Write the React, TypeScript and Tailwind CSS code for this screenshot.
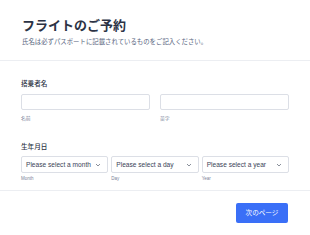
import React from "react";

const font = { fontFamily: '"Noto Sans CJK JP", "Liberation Sans", sans-serif' };

function Chevron() {
  return (
    <svg width="6" height="4" viewBox="0 0 6 4" className="shrink-0">
      <path d="M1 1 L3 3 L5 1" fill="none" stroke="#6b7280" strokeWidth="0.8" />
    </svg>
  );
}

function Select({ label, sub }: { label: string; sub: string }) {
  return (
    <div className="flex flex-col">
      <div className="flex h-[17px] items-center justify-between rounded-[2px] border border-[#dcdfe6] bg-white pl-[4px] pr-[6px]">
        <span className="font-['Liberation_Sans',sans-serif] text-[6.6px] text-[#3b4357]">{label}</span>
        <Chevron />
      </div>
      <span className="mt-[3px] font-['Liberation_Sans',sans-serif] text-[4.5px] leading-[6px] text-[#7a8399]">{sub}</span>
    </div>
  );
}

export default function App() {
  return (
    <div className="h-[235px] w-[310px] overflow-hidden bg-white" style={font}>
      <div className="border-b border-[#eceef2] px-[22px] pb-[14px] pt-[16px]">
        <h1 className="text-[13px] font-bold leading-[18px] text-[#2c3345]">フライトのご予約</h1>
        <p className="mt-[3px] text-[6.4px] leading-[9px] text-[#57647e]">
          氏名は必ずパスポートに記載されているものをご記入ください。
        </p>
      </div>

      <div className="px-[21px] pt-[18px]">
        <div className="text-[6.6px] font-medium leading-[9px] text-[#2c3345]">搭乗者名</div>
        <div className="mt-[6px] grid grid-cols-2 gap-[10px]">
          <div className="flex flex-col">
            <div className="h-[16px] rounded-[2px] border border-[#dcdfe6] bg-white" />
            <span className="mt-[5px] text-[4.8px] leading-[6px] text-[#7a8399]">名前</span>
          </div>
          <div className="flex flex-col">
            <div className="h-[16px] rounded-[2px] border border-[#dcdfe6] bg-white" />
            <span className="mt-[5px] text-[4.8px] leading-[6px] text-[#7a8399]">苗字</span>
          </div>
        </div>

        <div className="mt-[21px] text-[6.6px] font-medium leading-[9px] text-[#2c3345]">生年月日</div>
        <div className="mt-[5px] grid grid-cols-3 gap-[3px]">
          <Select label="Please select a month" sub="Month" />
          <Select label="Please select a day" sub="Day" />
          <Select label="Please select a year" sub="Year" />
        </div>
      </div>

      <div className="mt-[8px] flex justify-end border-t border-[#eceef2] px-[22px] pt-[12px]">
        <button className="h-[20px] w-[52px] rounded-[2px] bg-[#3a6ff7] text-[6.6px] text-white">次のページ</button>
      </div>
    </div>
  );
}
